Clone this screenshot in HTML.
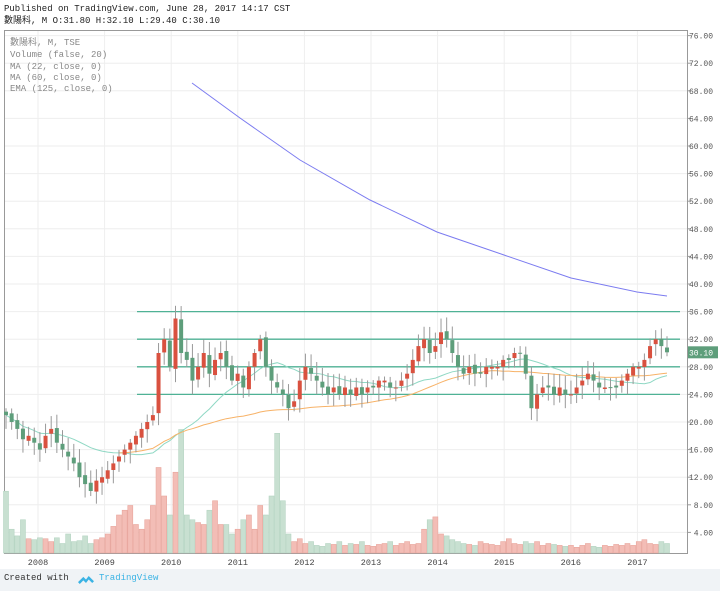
<!DOCTYPE html>
<html><head><meta charset="utf-8"><style>
body{margin:0;width:720px;height:591px;background:#fff;font-family:"Liberation Mono","Noto Sans CJK TC",monospace;overflow:hidden;position:relative}
.h{position:absolute;left:4px;font-size:9px;color:#222;line-height:12px}
#foot{position:absolute;left:0;top:569px;width:720px;height:22px;background:#f0f3f6}
</style></head><body>
<div class="h" style="top:3px">Published on TradingView.com, June 28, 2017 14:17 CST</div>
<div class="h" style="top:15px">數陽科, M O:31.80 H:32.10 L:29.40 C:30.10</div>
<svg id="s" width="720" height="569" style="position:absolute;left:0;top:0"></svg>
<div id="foot"><span style="position:absolute;left:4px;top:4px;font-size:9px;color:#333">Created with</span>
<svg style="position:absolute;left:78px;top:5px" width="16" height="11" viewBox="0 0 18 12"><path d="M0 9 L6 3 L9 6 L12 2 L18 8 L16 10 L12 6 L9 10 L6 7 L2 11Z" fill="#3bb3e4"/></svg>
<span style="position:absolute;left:99px;top:4px;font-size:9px;color:#3bb3e4">TradingView</span></div>
<script>
const s=document.getElementById('s');let h='';
const Y=p=>284-(p-40)*6.9;
h+='<rect x="4.5" y="30.5" width="683" height="523" fill="none" stroke="#999"/>';
for(let p=4;p<=76;p+=4){let y=Y(p);h+=`<line x1="5" x2="687" y1="${y}" y2="${y}" stroke="#eee"/><line x1="687" x2="691" y1="${y}" y2="${y}" stroke="#999"/><text x="713" y="${y+3}" font-size="8" text-anchor="end" fill="#555" font-family="Liberation Mono">${p.toFixed(2)}</text>`;}
const yrs=[2008,2009,2010,2011,2012,2013,2014,2015,2016,2017];
yrs.forEach((yr,i)=>{let x=38+i*66.6;h+=`<line x1="${x}" x2="${x}" y1="31" y2="553" stroke="#eee"/><text x="${x}" y="565" font-size="8.5" text-anchor="middle" fill="#444" font-family="Liberation Mono">${yr}</text>`;});
h+='<line x1="5" x2="687" y1="553.5" y2="553.5" stroke="#999"/>';
const c=[21,20,19,17.5,18,17,16,18,19,17,16,15,14,12,11,10,11.5,12,13,14,15,16,17,18,19,20,21,30,32,28,35,30,29,26,28,30,27,29,30,28,26,27,25,28,30,32,28,26,25,24,22,23,26,28,27,26,25,24,25,24,25,24,25,24,25,25,26,26,25,25,26,27,29,31,32,30,31,33,32,30,28,27,28,27,27,28,28,28,29,29,30,30,27,22,24,25,25,24,25,24,24,25,26,27,26,25,25,25,25,26,27,28,28,29,31,32,31,30.1];
let vol=[65,25,18,35,15,14,16,15,12,16,10,20,12,13,18,10,14,16,20,28,40,45,50,30,25,35,50,90,60,40,85,130,40,35,32,30,45,55,30,30,20,25,35,40,25,50,40,60,126,55,20,12,15,10,12,8,7,10,9,12,8,10,9,12,8,7,9,10,12,8,10,12,9,10,25,35,38,20,18,14,12,10,9,8,12,10,9,8,12,15,10,9,12,10,12,8,10,9,8,7,8,6,8,10,7,6,8,7,9,8,10,8,12,14,10,9,12,10];
const n=c.length,x0=6,dx=661/(n-1);
for(let i=0;i<n;i++){const o=i?c[i-1]:c[0]+0.5,up=c[i]>=o,x=x0+i*dx;const vh=vol[i]*0.95;h+=`<rect x="${x-2.5}" y="${553-vh}" width="5" height="${vh}" fill="${up?'#f3bdb6':'#c8e0d1'}" stroke="${up?'#e8a59c':'#b5d4c2'}" stroke-width="0.6"/>`;}
[36,32,28,24].forEach(p=>h+=`<line x1="137" x2="680" y1="${Y(p)}" y2="${Y(p)}" stroke="#4fb295" stroke-width="1.3"/>`);
function ma(k,col){let pts=[];for(let i=k>40?20:0;i<n;i++){let a=0,m=0;for(let j=Math.max(0,i-k+1);j<=i;j++){a+=c[j];m++;}pts.push((x0+i*dx).toFixed(1)+','+Y(a/m).toFixed(1));}h+=`<polyline points="${pts.join(' ')}" fill="none" stroke="${col}" stroke-width="1"/>`;}
ma(22,'#8fd8c4');ma(60,'#f7b267');
h+='<polyline points="192,83 240,118 300,160 370,200 437,232 504,255 571,278 637,292 667,296" fill="none" stroke="#7b7bf0" stroke-width="1"/>';
for(let i=0;i<n;i++){const o=i?c[i-1]+(Math.sin(i)*0.3):c[0]+0.5,cl=c[i],up=cl>=o,x=x0+i*dx;const hi=Math.max(o,cl)+0.5+Math.abs(Math.sin(i*3))*1.5,lo=Math.min(o,cl)-0.5-Math.abs(Math.cos(i*2))*1.5;
const col=up?'#d9513f':'#5e9e7b';h+=`<line x1="${x}" x2="${x}" y1="${Y(hi)}" y2="${Y(lo)}" stroke="#999"/><rect x="${x-2}" y="${Y(Math.max(o,cl))}" width="4" height="${Math.max(1,Math.abs(Y(o)-Y(cl)))}" fill="${col}"/>`;}
h+=`<rect x="688" y="${Y(30.1)-6}" width="30" height="12" fill="#5e9e7b"/><text x="713" y="${Y(30.1)+3}" font-size="8" text-anchor="end" fill="#fff" font-family="Liberation Mono">30.10</text>`;
h+='<g font-size="9" fill="#888" font-family="Liberation Mono,Noto Sans CJK TC,monospace"><text x="10" y="45">數陽科, M, TSE</text><text x="10" y="57">Volume (false, 20)</text><text x="10" y="69">MA (22, close, 0)</text><text x="10" y="80">MA (60, close, 0)</text><text x="10" y="91">EMA (125, close, 0)</text></g>';
s.innerHTML=h;
</script>
</body></html>
